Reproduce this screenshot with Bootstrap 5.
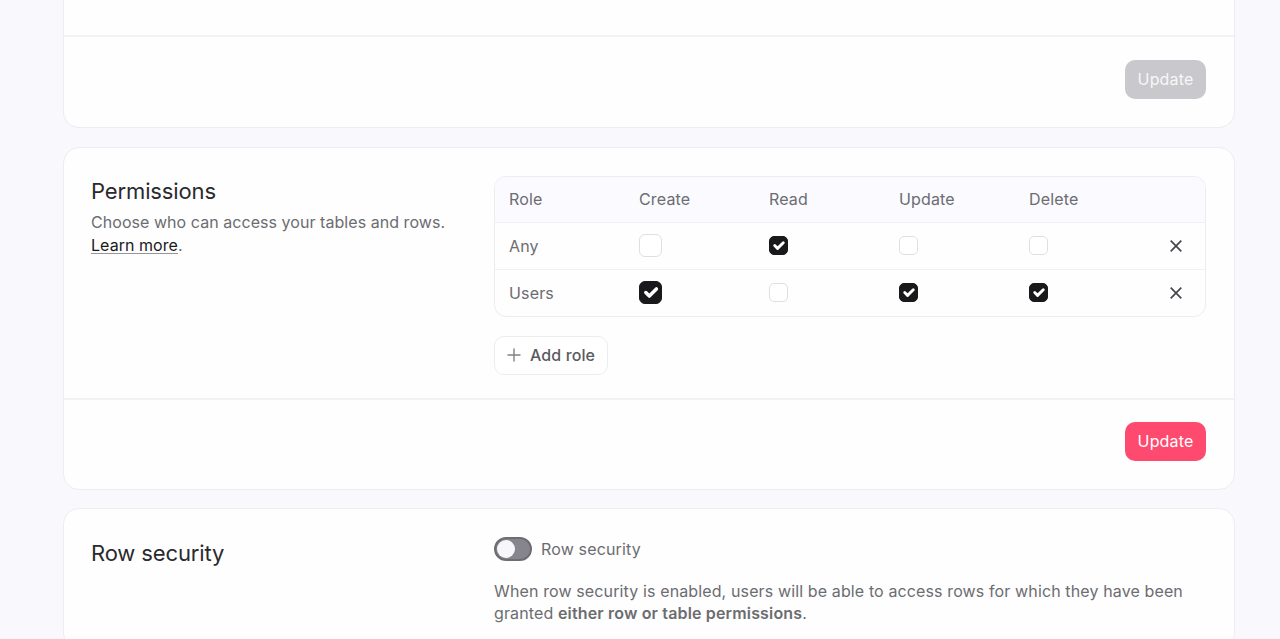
<!doctype html>
<html lang="en"><head><meta charset="utf-8"><title>Permissions</title>
<link href="https://cdn.jsdelivr.net/npm/bootstrap@5.3.0/dist/css/bootstrap.min.css" rel="stylesheet">
<style>
html,body{height:639px;overflow:hidden}
body{background:#f9f8fd;font-family:Inter,"Liberation Sans",sans-serif;font-size:16px;line-height:23px;color:#6c6c71;letter-spacing:.16px}
.page{width:1172px;margin-left:63px}
.pcard{background:#fefefe;border:1px solid #ededf0;border-radius:16px;margin-bottom:19px;overflow:hidden}
.pcard.clipped{border-top:0;border-radius:0 0 16px 16px}
.clip-top{height:35px}
.pfoot{border-top:2px solid #f2f1f6;padding:23px 28px 28px}
.pcard.second{margin-bottom:18px}
.pcard.second .pfoot{padding-top:22px}
.pbody{display:flex;padding:28px 28px 23px 27px}
.pcard.third .pbody{padding-top:29px}
.left{width:403px;flex:none}
.left h2{font-size:22px;line-height:30px;font-weight:400;color:#2a2a2e;margin:0 0 5px;letter-spacing:-.13px}
.left p{margin:0;letter-spacing:.05px}
.left a{color:#19191c;text-decoration:none;border-bottom:1px solid #97969c;display:inline-block;line-height:16px}
.right{flex:1;min-width:0}
.btn-upd{width:81px;height:39px;border-radius:10px;border:0;color:#fff;font-size:16px;font-weight:400;padding:0 0 1px;letter-spacing:.16px}
.btn-upd:disabled{background:#c9c8cc;color:#f7f7f9;opacity:1}
.btn-pink,.btn-pink:hover{background:#fe4a6f;color:#fff}
.tbl-wrap{border:1px solid #ededf0;border-radius:12px;overflow:hidden}
.ptable{table-layout:fixed;margin:0;--bs-table-bg:transparent;color:#6c6c71}
.ptable th,.ptable td{height:47px;padding:0;vertical-align:middle;border-bottom:1px solid #f0eff4;font-weight:400;color:#6c6c71;box-shadow:none}
.ptable tr:last-child td{border-bottom:0}
.ptable th{height:45px;background:#fafaff}
.ptable .c1{width:144px;padding-left:14px}
.ptable td.c1{padding-top:1px}
.ptable .c{width:130px}
.form-check-input.cb{display:block;margin:0;width:19px;height:19px;border:1.5px solid #dfdfe3;border-radius:5px;background-color:#fff;float:none}
.form-check-input.cb.lg{width:23px;height:23px;border-radius:6px}
.form-check-input.cb:checked{background-color:#19191c;border-color:#19191c;background-size:112%}
.xb{display:block;margin-left:auto;margin-right:21px;width:16px;height:16px;background:none;border:0;padding:0}
.xb svg{display:block}
.add{margin-top:19px;height:39px;width:114px;background:#fff;border:1px solid #ededf0;border-radius:10px;color:#5a5a60;font-size:16px;font-weight:500;padding:0 0 0 12px;display:flex;align-items:center;gap:9px;letter-spacing:.1px}
.add svg{margin-top:-1px}
.sw{display:flex;align-items:center;gap:9px;margin:0;padding:0;min-height:0;height:24px;margin-top:-1px}
.sw .form-check-input{width:38px;height:24px;margin:0;float:none;background-color:#86848c;border:2px solid #6e6d74;background-image:none;position:relative}
.sw .form-check-input::before{content:"";position:absolute;left:1px;top:1px;width:18px;height:18px;border-radius:50%;background:#f7f6fb}
.sw label{color:#6c6c71}
.note{margin:19px 0 0;width:700px;line-height:22.4px;letter-spacing:.125px}
.note b{font-weight:600;letter-spacing:.16px}
</style></head><body>
<div class="page">
 <div class="pcard clipped">
  <div class="clip-top"></div>
  <div class="pfoot d-flex justify-content-end"><button class="btn btn-upd" disabled>Update</button></div>
 </div>
 <div class="pcard second">
  <div class="pbody">
   <div class="left"><h2>Permissions</h2><p>Choose who can access your tables and rows. <a href="#">Learn more</a>.</p></div>
   <div class="right">
    <div class="tbl-wrap"><table class="table ptable">
     <thead><tr><th class="c1">Role</th><th class="c">Create</th><th class="c">Read</th><th class="c">Update</th><th class="c">Delete</th><th></th></tr></thead>
     <tbody>
      <tr><td class="c1">Any</td><td><input class="form-check-input cb lg" type="checkbox" aria-label="Any create"></td><td><input class="form-check-input cb" type="checkbox" checked aria-label="Any read"></td><td><input class="form-check-input cb" type="checkbox" aria-label="Any update"></td><td><input class="form-check-input cb" type="checkbox" aria-label="Any delete"></td>
       <td><button class="xb" aria-label="Remove"><svg width="16" height="16" viewBox="0 0 16 16" fill="none" stroke="#47474c" stroke-width="1.7"><path d="M2.7 2.7l10.6 10.6M13.3 2.7L2.7 13.3"/></svg></button></td></tr>
      <tr><td class="c1">Users</td><td><input class="form-check-input cb lg" type="checkbox" checked aria-label="Users create"></td><td><input class="form-check-input cb" type="checkbox" aria-label="Users read"></td><td><input class="form-check-input cb" type="checkbox" checked aria-label="Users update"></td><td><input class="form-check-input cb" type="checkbox" checked aria-label="Users delete"></td>
       <td><button class="xb" aria-label="Remove"><svg width="16" height="16" viewBox="0 0 16 16" fill="none" stroke="#47474c" stroke-width="1.7"><path d="M2.7 2.7l10.6 10.6M13.3 2.7L2.7 13.3"/></svg></button></td></tr>
     </tbody>
    </table></div>
    <button class="add"><svg width="14" height="14" viewBox="0 0 14 14" fill="none" stroke="#818186" stroke-width="1.4"><path d="M7 .5v13M.5 7h13"/></svg>Add role</button>
   </div>
  </div>
  <div class="pfoot d-flex justify-content-end"><button class="btn btn-upd btn-pink">Update</button></div>
 </div>
 <div class="pcard third">
  <div class="pbody">
   <div class="left"><h2>Row security</h2></div>
   <div class="right">
    <div class="form-check form-switch sw"><input class="form-check-input" type="checkbox" role="switch" id="rs"><label for="rs">Row security</label></div>
    <p class="note">When row security is enabled, users will be able to access rows for which they have been granted <b>either row or table permissions</b>.</p>
   </div>
  </div>
 </div>
</div>
<script src="https://cdn.jsdelivr.net/npm/bootstrap@5.3.0/dist/js/bootstrap.bundle.min.js"></script>
</body></html>
